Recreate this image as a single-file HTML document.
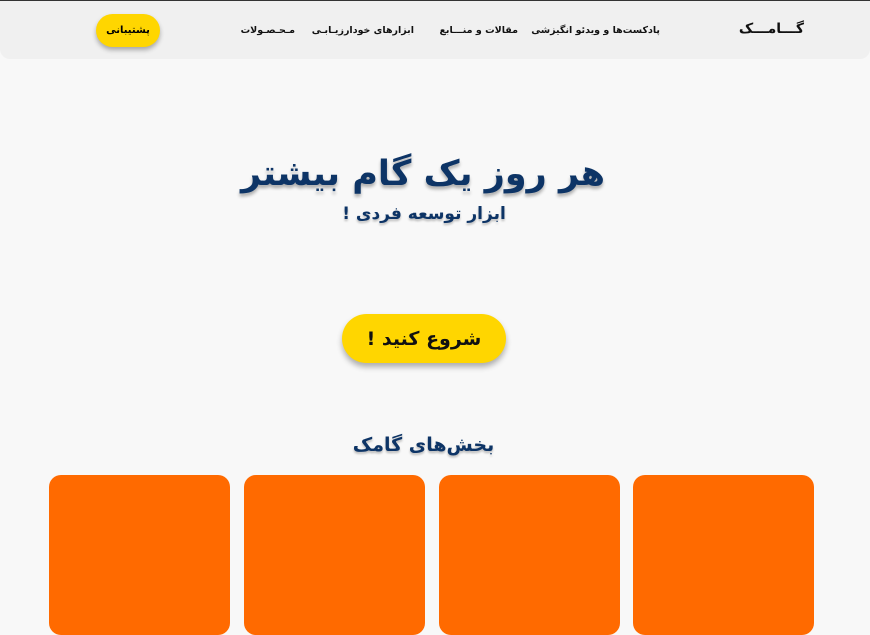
<!DOCTYPE html>
<html><head><meta charset="utf-8"><style>
*{margin:0;padding:0;box-sizing:border-box}
body{width:870px;height:615px;overflow:hidden;background:#f8f8f8;font-family:"DejaVu Sans","Liberation Sans",sans-serif;direction:rtl;position:relative}
.top{position:absolute;left:0;top:0;width:870px;height:1px;background:#333}
.hdr{position:absolute;left:0;top:1px;width:870px;height:58px;background:#f0f0f0;border-radius:0 0 10px 10px}
.t{position:absolute;white-space:nowrap;color:#111}
.nav{font-size:9.5px;font-weight:bold;top:25px}
.sup{position:absolute;left:96px;top:14px;width:64px;height:33px;border-radius:17px;background:#ffd600;box-shadow:0 3px 5px rgba(0,0,0,.3);font-size:10px;font-weight:bold;display:flex;align-items:center;justify-content:center}
h1{position:absolute;left:0;width:846px;text-align:center;top:154px;font-size:35px;color:#0d3466;text-shadow:0 3px 3px rgba(0,0,0,.3)}
.sub{position:absolute;left:0;width:848px;text-align:center;top:204px;font-size:17px;font-weight:bold;color:#0d3466;text-shadow:0 2px 2px rgba(0,0,0,.25)}
.btn{position:absolute;left:342px;top:314px;width:164px;height:49px;border-radius:25px;background:#ffd600;box-shadow:0 4px 6px rgba(0,0,0,.3);font-size:19px;font-weight:bold;display:flex;align-items:center;justify-content:center;color:#111}
.sec{position:absolute;left:0;width:847px;text-align:center;top:434px;font-size:19px;font-weight:bold;color:#0d3466;text-shadow:0 2px 2px rgba(0,0,0,.25)}
.card{position:absolute;top:475px;width:181px;height:160px;background:#ff6a00;border-radius:12px}
</style></head><body>
<div class="top"></div>
<div class="hdr"></div>
<div class="t" style="right:66px;top:21px;font-size:14px;font-weight:bold">گـــامـــک</div>
<div class="t nav" style="right:210px">پادکست‌ها و ویدئو انگیزشی</div>
<div class="t nav" style="right:352px">مقالات و منـــابع</div>
<div class="t nav" style="right:456px">ابزارهای خودارزیـابـی</div>
<div class="t nav" style="right:575px">مـحـصـولات</div>
<div class="sup">پشتیبانی</div>
<h1>هر روز یک گام بیشتر</h1>
<div class="sub">ابزار توسعه فردی !</div>
<div class="btn">شروع کنید !</div>
<div class="sec">بخش‌های گامک</div>
<div class="card" style="left:49px"></div>
<div class="card" style="left:244px"></div>
<div class="card" style="left:439px"></div>
<div class="card" style="left:633px"></div>
</body></html>
